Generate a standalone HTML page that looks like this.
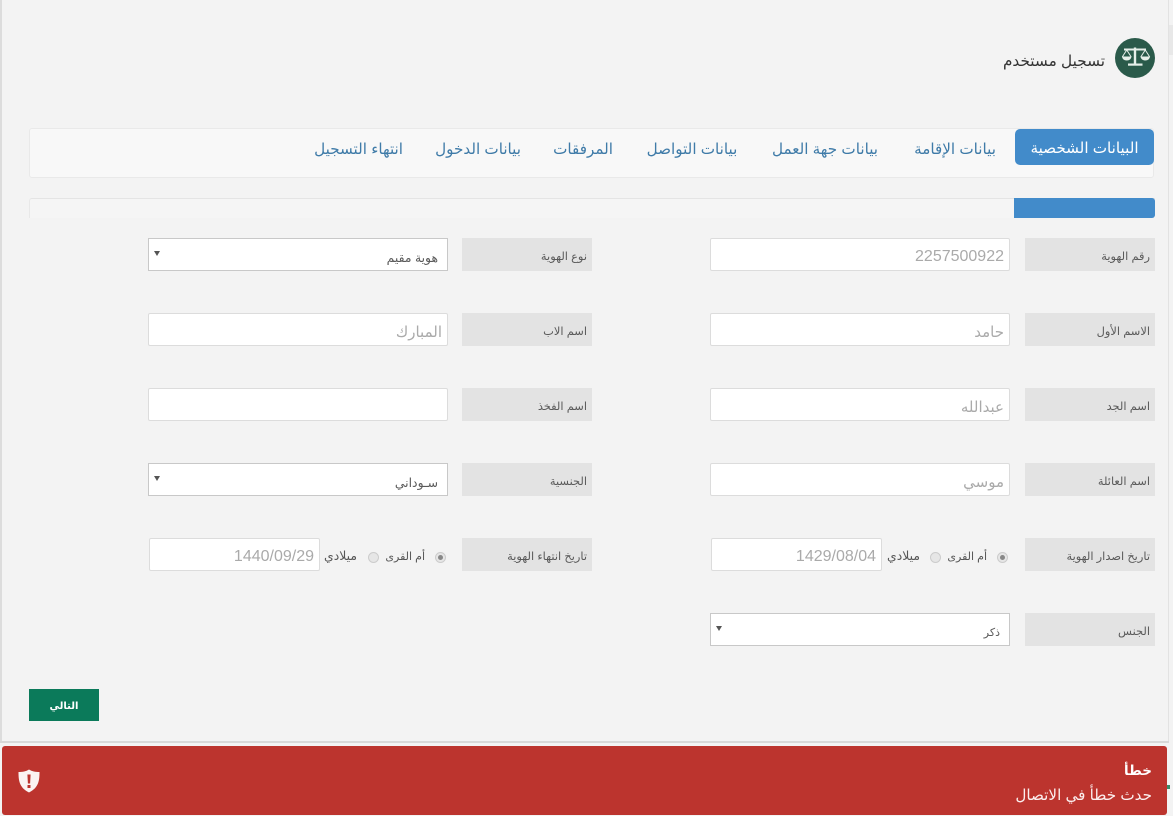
<!DOCTYPE html>
<html lang="ar" dir="rtl">
<head>
<meta charset="utf-8">
<title>تسجيل مستخدم</title>
<style>
html,body{margin:0;padding:0}
body{width:1173px;height:816px;overflow:hidden;background:#f3f3f3;position:relative;font-family:"Liberation Sans","DejaVu Sans",sans-serif;color:#555}
.a{position:absolute;box-sizing:border-box;white-space:nowrap}
.lbl{width:130px;height:33px;background:#e3e3e3;font-size:11.400px;line-height:39px;text-align:right;padding-right:5px;color:#5a5a5a}
.inp{width:300px;height:33px;background:#fff;border:1px solid #dcdcdc;border-radius:2px;font-size:15px;line-height:37px;text-align:right;padding-right:5px;color:#aaa}
.num{font-size:16px;line-height:36px}
.sel{width:300px;height:33px;background:#fff;border:1px solid #c8c8c8;font-size:12.400px;line-height:38px;text-align:right;padding-right:9px;color:#5a5a5a}
.sel.sm{font-size:11px}
.sel i{position:absolute;left:5px;top:12px;width:0;height:0;border-left:3px solid transparent;border-right:3px solid transparent;border-top:5px solid #555}
.tab{top:131px;height:40px;line-height:38px;font-size:15.200px;color:#3f7ba8;text-align:center}
.rd{width:11px;height:11px;border-radius:50%;background:#e6e6e6;border:1px solid #ccc}
.rd.on::after{content:"";position:absolute;left:2px;top:2px;width:5px;height:5px;border-radius:50%;background:#888}
.t{font-size:11px;line-height:14px;color:#555}
.m{font-size:12.400px}
</style>
</head>
<body>
<div class="a" style="left:0;top:0;width:2px;height:742px;background:#dcdcdc"></div>
<div class="a" style="left:1168px;top:0;width:1px;height:742px;background:#e2e2e2"></div>
<div class="a" style="left:1169px;top:25px;width:4px;height:30px;background:#e8e8e8"></div>

<svg class="a" style="left:1115px;top:38px" width="40" height="40" viewBox="0 0 40 40">
<circle cx="20" cy="20" r="20" fill="#2a5a4a"/>
<g fill="#e6efe9">
<path d="M18.800 9.500h2.400v16h-2.400z"/>
<path d="M13 25.500h14.500v2.200H13z"/>
<path d="M9 10.500h22v2H9z"/>
<path d="M7 18.500h9.500c-.3 2.500-2.200 4-4.750 4s-4.450-1.500-4.750-4z"/>
<path d="M25.500 18.500h9.500c-.3 2.500-2.200 4-4.750 4s-4.450-1.500-4.750-4z"/>
<path d="M11.750 12l-4.500 7M11.750 12l4.500 7M30.250 12l-4.500 7M30.250 12l4.500 7" fill="none" stroke="#e6efe9" stroke-width="1"/>
</g>
</svg>
<div class="a" style="right:68px;top:51px;font-size:15.300px;line-height:22px;color:#333">تسجيل مستخدم</div>

<div class="a" style="left:29px;top:128px;width:1125px;height:50px;background:#f8f8f8;border:1px solid #e9e9e9;border-radius:3px"></div>
<div class="a tab" style="left:1015px;top:129px;width:139px;height:36px;line-height:40px;background:#428bca;color:#fff;border-radius:5px">البيانات الشخصية</div>
<div class="a tab" style="left:912px;width:86px">بيانات الإقامة</div>
<div class="a tab" style="left:771px;width:108px">بيانات جهة العمل</div>
<div class="a tab" style="left:645px;width:94px">بيانات التواصل</div>
<div class="a tab" style="left:554px;width:59px">المرفقات</div>
<div class="a tab" style="left:436px;width:85px">بيانات الدخول</div>
<div class="a tab" style="left:315px;width:88px">انتهاء التسجيل</div>

<div class="a" style="left:29px;top:198px;width:1126px;height:20px;background:#f5f5f5;border-top:1px solid #e4e4e4;border-left:1px solid #e8e8e8;border-radius:3px 0 0 0"></div>
<div class="a" style="left:1014px;top:198px;width:141px;height:20px;background:#428bca;border-radius:0 3px 3px 0"></div>

<div class="a lbl" style="left:1025px;top:238px">رقم الهوية</div>
<div class="a inp num" style="left:710px;top:238px">2257500922</div>
<div class="a lbl" style="left:462px;top:238px">نوع الهوية</div>
<div class="a sel" style="left:148px;top:238px">هوية مقيم<i></i></div>

<div class="a lbl" style="left:1025px;top:313px">الاسم الأول</div>
<div class="a inp" style="left:710px;top:313px">حامد</div>
<div class="a lbl" style="left:462px;top:313px">اسم الاب</div>
<div class="a inp" style="left:148px;top:313px">المبارك</div>

<div class="a lbl" style="left:1025px;top:388px">اسم الجد</div>
<div class="a inp" style="left:710px;top:388px">عبدالله</div>
<div class="a lbl" style="left:462px;top:388px">اسم الفخذ</div>
<div class="a inp" style="left:148px;top:388px"></div>

<div class="a lbl" style="left:1025px;top:463px">اسم العائلة</div>
<div class="a inp" style="left:710px;top:463px">موسي</div>
<div class="a lbl" style="left:462px;top:463px">الجنسية</div>
<div class="a sel" style="left:148px;top:463px">سـوداني<i></i></div>

<div class="a lbl" style="left:1025px;top:538px">تاريخ اصدار الهوية</div>
<div class="a rd on" style="left:997px;top:552px"></div>
<div class="a t" style="right:186px;top:550px">أم القرى</div>
<div class="a rd" style="left:930px;top:552px"></div>
<div class="a t m" style="right:253px;top:549px">ميلادي</div>
<div class="a inp num" style="left:711px;top:538px;width:171px">1429/08/04</div>

<div class="a lbl" style="left:462px;top:538px">تاريخ انتهاء الهوية</div>
<div class="a rd on" style="left:435px;top:552px"></div>
<div class="a t" style="right:748px;top:550px">أم القرى</div>
<div class="a rd" style="left:368px;top:552px"></div>
<div class="a t m" style="right:816px;top:549px">ميلادي</div>
<div class="a inp num" style="left:149px;top:538px;width:171px">1440/09/29</div>

<div class="a lbl" style="left:1025px;top:613px">الجنس</div>
<div class="a sel sm" style="left:710px;top:613px">ذكر<i></i></div>

<div class="a" style="left:29px;top:689px;width:70px;height:32px;background:#0b7a5a;color:#fff;font-size:10px;font-weight:bold;line-height:35px;text-align:center">التالي</div>

<div class="a" style="left:0;top:741px;width:1169px;height:2px;background:#d8d8d8"></div>
<div class="a" style="left:1167px;top:785px;width:3px;height:4px;background:#3a8a6a"></div>
<div class="a" style="left:2px;top:746px;width:1165px;height:69px;background:#bc342e;border-radius:3px"></div>
<div class="a" style="right:21px;top:761px;font-size:13.500px;line-height:20px;font-weight:bold;color:#fff">خطأ</div>
<div class="a" style="right:21px;top:786px;font-size:15.200px;line-height:20px;color:#fbeeee">حدث خطأ في الاتصال</div>
<svg class="a" style="left:18px;top:769px" width="22" height="24" viewBox="0 0 22 24">
<path d="M11 0.500C8 2.500 4.500 3 0.500 3c0 8 .5 15.500 10.500 20.500C21 18.500 21.500 11 21.500 3c-4 0-7.500-.5-10.500-2.500z" fill="#fbf3f2"/>
<path d="M9.400 5.500h3.200l-.5 9h-2.200zM9.500 16h3v3h-3z" fill="#bc342e"/>
</svg>
</body>
</html>
